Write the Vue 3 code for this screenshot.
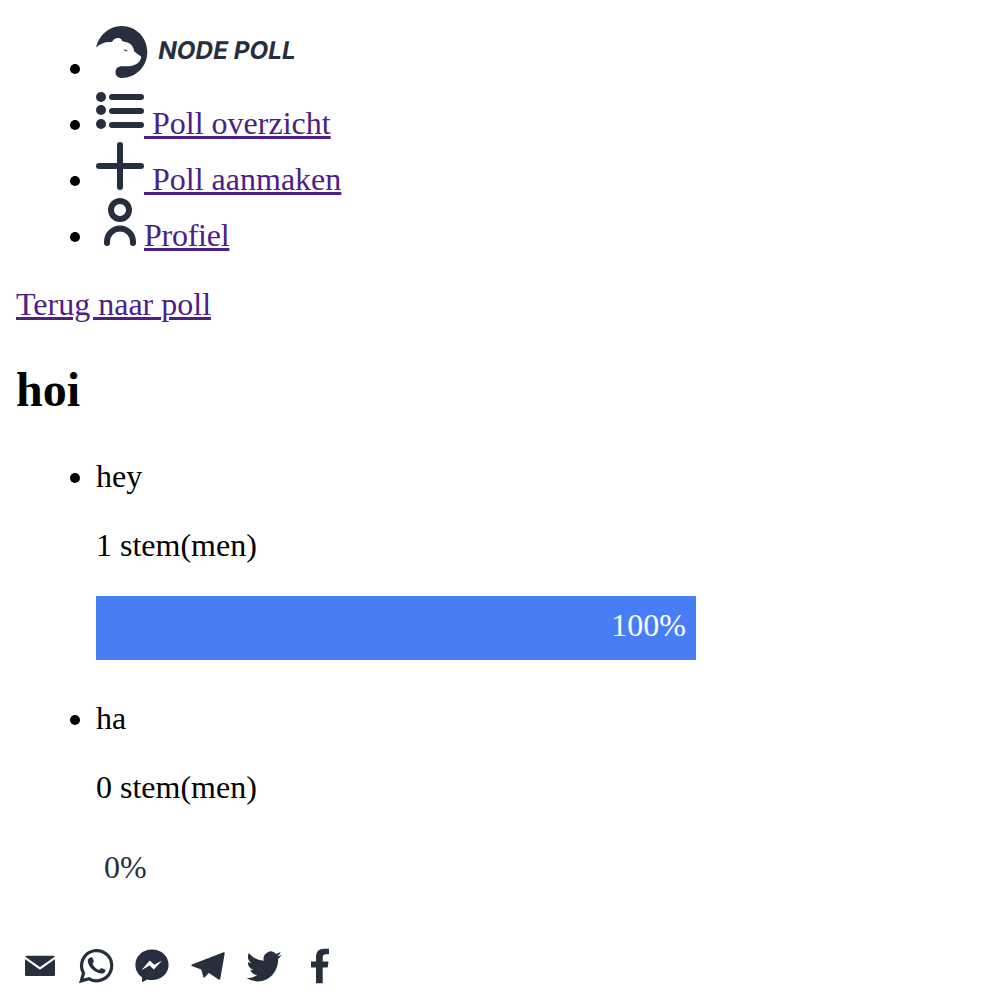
<script setup>
const navItems = [
  { icon: 'list', label: '\u00a0Poll overzicht' },
  { icon: 'plus', label: '\u00a0Poll aanmaken' },
  { icon: 'person', label: 'Profiel' },
]
const answers = [
  { text: 'hey', votes: 1, percent: 100 },
  { text: 'ha', votes: 0, percent: 0 },
]
</script>

<template>
  <div class="page">
    <ul class="nav">
      <li class="brand">
        <svg class="logo" width="208" height="58" viewBox="0 0 208 58">
          <g transform="translate(0 2)">
            <path d="M0 21.500C3 8.500 13.500 0 25.500 0C40 0 51.300 11.500 51.300 26C51.300 40.500 40 52 25.500 52C22 52 19.500 49.500 19.500 46.200C19.500 42.500 22 40.200 26 40.200C31 40.200 35 40.600 39 38.800C42.500 37 44.500 35 45.200 31.500C45.300 30.300 44.300 29.700 42.500 28.800L38.300 25.600C37.300 20.500 35 17.800 31.500 16.600L26.400 15.300C26 13.300 24.500 12 22 12C19.500 12 18 12.900 17 14.500C16.500 15.800 15.500 16 13.500 16C8.500 16 3.500 18 0 21.500Z" />
            <path d="M27.800 23.500C29.300 23.200 31 24 31.500 25.200C30 25.400 28.300 25 27.800 23.500Z" />
            <text transform="translate(61 33) skewX(-10)" textLength="137.500" lengthAdjust="spacingAndGlyphs">NODE POLL</text>
          </g>
        </svg>
      </li>
      <li v-for="item in navItems" :key="item.icon">
        <a href="#"><svg class="icon" width="48" height="48" viewBox="0 0 48 48">
          <g v-if="item.icon === 'list'">
            <circle cx="5" cy="11" r="5" /><circle cx="5" cy="24" r="5" /><circle cx="5" cy="38" r="5" />
            <path class="line" d="M16 11h29M16 25h29M16 39h29" />
          </g>
          <path v-else-if="item.icon === 'plus'" class="line" d="M24 3v42M3 24h42" />
          <g v-else class="line">
            <circle cx="24" cy="12" r="9" />
            <path d="M11 45v-1.500a13 13 0 0 1 26 0V45" />
          </g>
        </svg><span class="label" :class="item.icon">{{ item.label }}</span></a>
      </li>
    </ul>

    <a class="back label" href="#">Terug naar poll</a>
    <h2>hoi</h2>

    <ul class="answers">
      <li v-for="answer in answers" :key="answer.text">
        <div>{{ answer.text }}</div>
        <p>{{ answer.votes }} stem(men)</p>
        <div class="track">
          <div class="bar" :class="{ empty: answer.percent === 0 }" :style="{ width: answer.percent + '%' }">{{ answer.percent }}%</div>
        </div>
      </li>
    </ul>

    <div class="share">
      <svg viewBox="0 0 48 48">
        <rect x="9" y="13.700" width="30" height="20.300" rx="1.500" />
        <path class="cut" d="M8 15.200L24 26.400L40 15.200" />
      </svg>
      <svg viewBox="0 0 48 48">
        <path class="ring" d="M9.300 38.900L11.500 31.100A15.100 15.100 0 1 1 17.200 36.800Z" />
        <path d="M17.700 15.700C18.700 14.900 20.100 15 20.600 16.100L21.600 18.600C22 19.700 21.700 20.300 20.600 21.500C21.600 24.500 24 26.900 27 28L28.700 26.500C29.300 26.100 29.800 26.100 30.500 26.400L32.800 27.600C33.500 28 33.500 28.500 33.200 29.400C32.500 31 30.900 31.700 29 31.500C22.500 30.600 16.600 25 15.800 19.400C15.700 17.800 16.500 16.500 17.700 15.700Z" />
      </svg>
      <svg viewBox="0 0 48 48">
        <path d="M24 7.400C33.500 7.400 40.600 14 40.600 22.800C40.600 31.500 33.500 38 24 38C22.100 38 20.500 37.800 19.300 37.400L14 40.300V35.200C9.700 32.200 7.400 28 7.400 22.800C7.400 14 14.500 7.400 24 7.400Z" />
        <path class="bolt" d="M13.300 28.300L21.800 18.600L26.200 22.700L34.200 18.600L25.800 27.500L21.600 23.500Z" />
      </svg>
      <svg viewBox="0 0 48 48">
        <path d="M7.800 22.400L39.600 10.200Q40.900 9.900 40.700 11.300L36.300 36.800Q35.900 38.200 34.700 37.500L24.800 30.900L20.600 35.400Q19.600 36.100 19.300 34.800L17.200 27.400L7.800 24Q6.700 23.100 7.800 22.400Z" />
      </svg>
      <svg viewBox="0 0 48 48">
        <path transform="translate(6.500 6.100) scale(1.465 1.530)" d="M23.953 4.570a10 10 0 01-2.825.775 4.958 4.958 0 002.163-2.723c-.951.555-2.005.959-3.127 1.184a4.920 4.920 0 00-8.384 4.482C7.690 8.095 4.067 6.130 1.640 3.162a4.822 4.822 0 00-.666 2.475c0 1.710.870 3.213 2.188 4.096a4.904 4.904 0 01-2.228-.616v.060a4.923 4.923 0 003.946 4.827 4.996 4.996 0 01-2.212.085 4.936 4.936 0 004.604 3.417 9.867 9.867 0 01-6.102 2.105c-.390 0-.779-.023-1.170-.067a13.995 13.995 0 007.557 2.209c9.053 0 13.998-7.496 13.998-13.985 0-.210 0-.420-.015-.630A9.935 9.935 0 0024 4.590z" />
      </svg>
      <svg viewBox="0 0 48 48">
        <path d="M20 41.300V25.400H15V19.500H20V15C20 9.600 22.900 6.800 28 6.800H33V12.300H30C27.500 12.300 26.700 13.600 26.700 15.700V19.500H32.500L31.700 25.400H26.700V41.300Z" />
      </svg>
    </div>
  </div>
</template>

<style>
body { margin: 0; background: #fff; }
</style>

<style scoped>
.page {
  box-sizing: border-box;
  height: 1000px;
  overflow: hidden;
  padding: 24px 16px 0;
  font: 32px/36px "Liberation Serif", "Times New Roman", serif;
  color: #000;
}
ul { list-style: none; margin: 0; padding: 0 0 0 80px; }
li { position: relative; }
li::before {
  content: '';
  position: absolute;
  left: -26px;
  top: 15px;
  width: 10px;
  height: 10px;
  border-radius: 50%;
  background: #000;
}
.nav li { height: 56px; }
.nav li::before { top: 34px; }
.nav .brand { height: 62px; }
.nav .brand::before { top: 40px; }
.logo { display: block; fill: #272e3e; }
.logo text { font: normal 700 24.5px Inter, sans-serif; }
.nav a { display: flex; align-items: flex-start; }
.nav .label { margin-top: 19px; white-space: pre; }
a { color: #4c2085; text-decoration: none; }
.label {
  text-decoration: underline;
  text-decoration-thickness: 3px;
  text-underline-offset: 2px;
}
.label.person { letter-spacing: -0.25px; }
.icon { flex: none; fill: #272e3e; }
.line { fill: none; stroke: #272e3e; stroke-width: 6; stroke-linecap: round; }
.back { display: block; width: max-content; margin-top: 32px; }
h2 { margin: 40px 0; font-size: 48px; line-height: 56px; font-weight: 700; }
.answers li { height: 242px; }
p { margin: 33px 0; }
.track { width: 600px; height: 64px; }
.bar {
  box-sizing: border-box;
  height: 64px;
  padding: 11px 10px 0 0;
  text-align: right;
  color: #fff;
  background: #487ef5;
}
.bar.empty { padding: 11px 0 0 8px; text-align: left; color: #272e3e; background: none; }
.share { display: flex; gap: 8px; }
.share svg { width: 48px; height: 48px; fill: #272e3e; }
.share .cut { fill: none; stroke: #fff; stroke-width: 2.2; }
.share .ring { fill: none; stroke: #272e3e; stroke-width: 3.2; stroke-linejoin: miter; }
.share .bolt { fill: #fff; }
</style>
